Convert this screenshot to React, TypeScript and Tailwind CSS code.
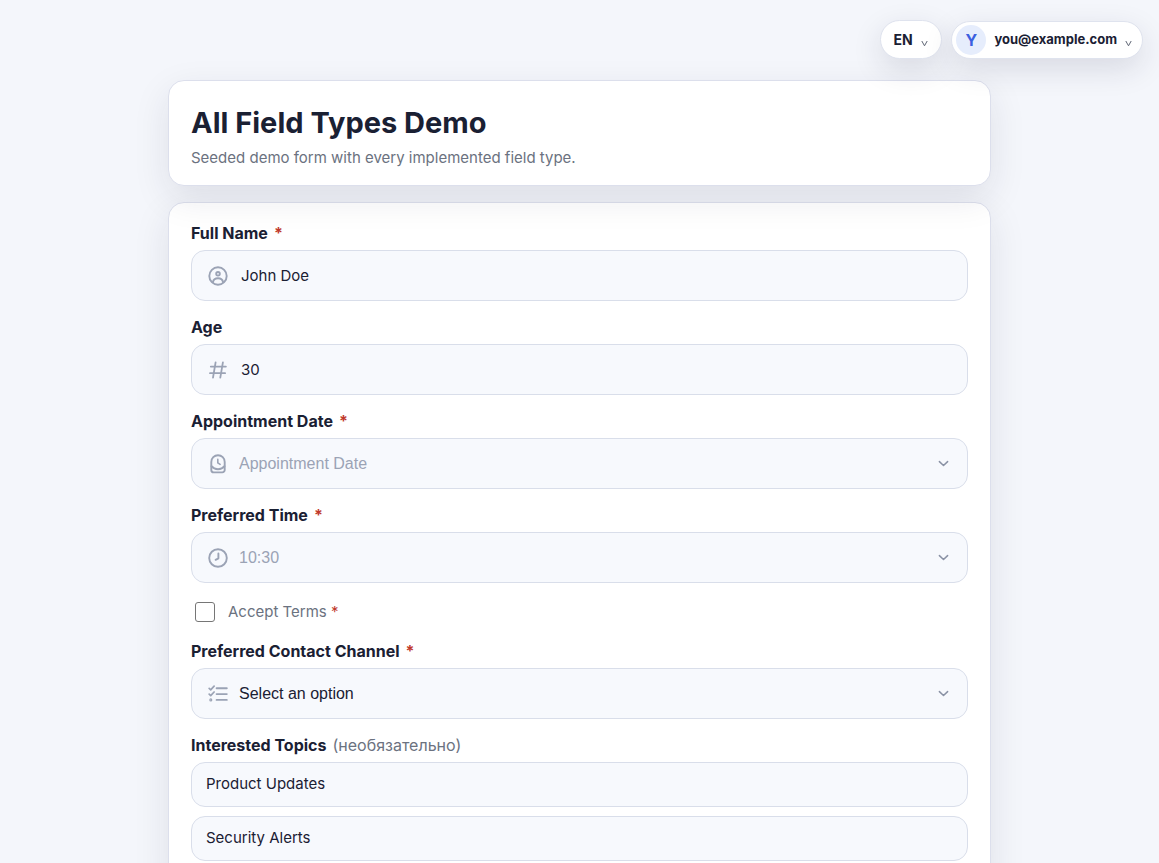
import { useState } from 'react'
import type { ReactNode } from 'react'

type FieldProps = {
  id: string
  label: string
  required?: boolean
  children: ReactNode
}

const topics = ['Product Updates', 'Security Alerts']

const cardClass =
  'rounded-2xl border border-[#dcdfec] bg-white px-[22px] shadow-[0_12px_36px_rgba(28,30,60,0.10)]'
const boxClass =
  'flex h-[51px] items-center rounded-[14px] border border-[#d9deea] bg-[#f7f9fd] pl-4 pr-[17px]'
const pillClass =
  'relative flex items-center rounded-full border border-[#dfe3ee] bg-white text-[#1a2033] shadow-[0_10px_30px_rgba(28,30,60,0.13)]'

function Icon({ children }: { children: ReactNode }) {
  return (
    <svg
      className="size-5 shrink-0 text-[#9ba3b5]"
      viewBox="0 0 20 20"
      fill="none"
      stroke="currentColor"
      strokeWidth="1.9"
      strokeLinecap="round"
      strokeLinejoin="round"
      aria-hidden="true"
    >
      {children}
    </svg>
  )
}

function UserIcon() {
  return (
    <Icon>
      <circle cx="10" cy="10" r="8.7" />
      <circle cx="10" cy="7.8" r="1.8" />
      <path d="M4.9 16.2c.5-2.5 2.4-3.9 5.1-3.9s4.6 1.4 5.1 3.9" />
    </Icon>
  )
}

function HashIcon() {
  return (
    <Icon>
      <path d="M7.6 2.3 5 17.7M14.9 2.3l-2.6 15.4M2.8 6.6h15.1M2 13.2h15.1" strokeWidth="1.8" />
    </Icon>
  )
}

function DateIcon() {
  return (
    <Icon>
      <path d="M3.3 16V7.9a6.7 6.7 0 0 1 13.4 0V16a2.4 2.4 0 0 1-2.4 2.4H5.7A2.4 2.4 0 0 1 3.3 16Z" />
      <path d="M3.5 12.2c1.6 2 3.9 3 6.5 3s4.9-1 6.5-3" />
      <path d="M9.8 5.4v3.5l2.3 1.5" strokeWidth="1.6" />
    </Icon>
  )
}

function ClockIcon() {
  return (
    <Icon>
      <circle cx="10" cy="10" r="8.8" />
      <path d="M10.4 5.4v4.9l-2.8 1.5" />
    </Icon>
  )
}

function ListIcon() {
  return (
    <Icon>
      <path d="M8.6 4.3h10.2M8.6 10.1h10.2M8.6 15.9h10.2" />
      <path d="m1.2 4.4 1.5 1.4 3.4-3.6M1.2 10.2l1.5 1.4L6.1 8" strokeWidth="1.7" />
      <circle cx="2.8" cy="15.9" r=".6" />
    </Icon>
  )
}

function Chevron() {
  return (
    <svg
      className="pointer-events-none w-[13px] shrink-0 text-[#8a92a5]"
      viewBox="0 0 13 13"
      fill="none"
      stroke="currentColor"
      strokeWidth="1.5"
      strokeLinecap="round"
      strokeLinejoin="round"
      aria-hidden="true"
    >
      <path d="M2.4 4.6 6.5 8.5l4.1-3.9" />
    </svg>
  )
}

function SmallChevron() {
  return (
    <svg
      className="pointer-events-none mt-2 w-[7px] shrink-0 text-[#5f6675]"
      viewBox="0 0 7 7"
      fill="none"
      stroke="currentColor"
      strokeWidth="1"
      aria-hidden="true"
    >
      <path d="M.8 1 3.5 5.8 6.2 1" />
    </svg>
  )
}

function Field({ id, label, required, children }: FieldProps) {
  return (
    <div className="flex flex-col gap-[7px]">
      <label htmlFor={id} className="text-base leading-5 font-bold">
        {label}
        {required && <span className="ml-1.5 text-[#c0392b]">*</span>}
      </label>
      {children}
    </div>
  )
}

export default function App() {
  const [name, setName] = useState('John Doe')
  const [age, setAge] = useState('30')
  const [accepted, setAccepted] = useState(false)
  const [selected, setSelected] = useState<string[]>([])

  function toggleTopic(topic: string) {
    setSelected((prev) => (prev.includes(topic) ? prev.filter((t) => t !== topic) : [...prev, topic]))
  }

  return (
    <div className="min-h-screen bg-[#f4f6fb] font-['Inter',sans-serif] text-[#1a2033]">
      <header className="relative z-20 flex items-center justify-end gap-[9px] px-4 pt-5 pb-[21px]">
        <div className={`${pillClass} h-[39px] pr-[13px]`}>
          <select
            aria-label="Language"
            className="-mr-5 h-full appearance-none rounded-full bg-transparent pl-3 pr-7 text-sm font-bold outline-none"
          >
            <option>EN</option>
          </select>
          <SmallChevron />
        </div>
        <button type="button" className={`${pillClass} h-[38px] gap-2 pl-1 pr-[10px]`}>
          <span className="flex size-[30px] items-center justify-center rounded-full bg-[#e6edfc] text-base font-bold text-[#3b5fe0]">
            Y
          </span>
          <span className="text-[13px] font-bold">you@example.com</span>
          <SmallChevron />
        </button>
      </header>

      <main className="mx-auto flex max-w-[823px] flex-col gap-4">
        <section className={`${cardClass} relative z-10 pt-6 pb-4`}>
          <h1 className="text-[29px] leading-9 font-bold">All Field Types Demo</h1>
          <p className="mt-1.5 text-[15px] leading-[22px] text-[#6b7280]">
            Seeded demo form with every implemented field type.
          </p>
        </section>

        <form className={`${cardClass} flex flex-col gap-4 pt-5 pb-6`}>
          <Field id="full-name" label="Full Name" required>
            <div className={boxClass}>
              <UserIcon />
              <input
                id="full-name"
                className="ml-[13px] h-full min-w-0 flex-1 bg-transparent text-[15px] outline-none"
                value={name}
                onChange={(e) => setName(e.target.value)}
              />
            </div>
          </Field>

          <Field id="age" label="Age">
            <div className={boxClass}>
              <HashIcon />
              <input
                id="age"
                inputMode="numeric"
                className="ml-[13px] h-full min-w-0 flex-1 bg-transparent text-[15px] outline-none"
                value={age}
                onChange={(e) => setAge(e.target.value)}
              />
            </div>
          </Field>

          <Field id="date" label="Appointment Date" required>
            <div className={boxClass}>
              <DateIcon />
              <input
                id="date"
                readOnly
                placeholder="Appointment Date"
                className="ml-[11px] h-full min-w-0 flex-1 bg-transparent font-['Liberation_Sans',sans-serif] text-base outline-none placeholder:text-[#9ba3b5]"
              />
              <Chevron />
            </div>
          </Field>

          <Field id="time" label="Preferred Time" required>
            <div className={boxClass}>
              <ClockIcon />
              <input
                id="time"
                readOnly
                placeholder="10:30"
                className="ml-[11px] h-full min-w-0 flex-1 bg-transparent font-['Liberation_Sans',sans-serif] text-base outline-none placeholder:text-[#9ba3b5]"
              />
              <Chevron />
            </div>
          </Field>

          <label className="flex h-[26px] items-center gap-[13px] pl-1 text-[15px] text-[#6b7280]">
            <input
              type="checkbox"
              className="size-5 appearance-none rounded-[3px] border border-[#767676] bg-white checked:bg-[#3b5fe0]"
              checked={accepted}
              onChange={(e) => setAccepted(e.target.checked)}
            />
            <span>
              Accept Terms <span className="text-[#c0392b]">*</span>
            </span>
          </label>

          <Field id="channel" label="Preferred Contact Channel" required>
            <div className={boxClass}>
              <ListIcon />
              <select
                id="channel"
                className="-mr-[13px] ml-[11px] h-full min-w-0 flex-1 appearance-none bg-transparent font-['Liberation_Sans',sans-serif] text-base outline-none"
              >
                <option>Select an option</option>
              </select>
              <Chevron />
            </div>
          </Field>

          <fieldset className="flex flex-col gap-[9px]">
            <legend className="mb-[7px] text-base leading-5 font-bold">
              Interested Topics
              <span className="ml-1.5 font-normal text-[#6b7280]">(необязательно)</span>
            </legend>
            {topics.map((topic) => (
              <label
                key={topic}
                className="relative flex h-[45px] cursor-pointer items-center rounded-[14px] border border-[#d9deea] bg-[#f7f9fd] px-3.5 text-[15px] has-checked:border-[#3b5fe0]"
              >
                <input
                  type="checkbox"
                  className="sr-only"
                  checked={selected.includes(topic)}
                  onChange={() => toggleTopic(topic)}
                />
                {topic}
              </label>
            ))}
          </fieldset>
        </form>
      </main>
    </div>
  )
}
